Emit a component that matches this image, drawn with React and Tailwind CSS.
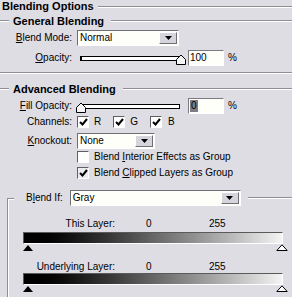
import React from "react";

const etched = "h-[2px] border-t border-t-[#8e8e94] border-b border-b-white";

const Header = ({ title }) => (
  <div className="flex items-center h-[14px]">
    <div className={`w-[9px] ${etched}`} />
    <span className="ml-[4px] font-bold text-[11px] leading-none">{title}</span>
    <div className={`flex-1 ml-[7px] ${etched}`} />
  </div>
);

const Arrow = () => (
  <svg width="7" height="4" viewBox="0 0 7 4">
    <path d="M0 0 H7 L3.5 4 Z" fill="#000" />
  </svg>
);

const Select = ({ value, width }) => (
  <div className={`flex h-[16px] bg-[#fffffa] border border-t-[#6e6e74] border-l-[#6e6e74] border-r-white border-b-white ${width}`}>
    <span className="flex-1 pl-[2px] leading-[14px]">{value}</span>
    <div className="w-[18px] m-[1px] bg-[#d6d5dc] border border-t-white border-l-white border-r-[#6e6e74] border-b-[#6e6e74] flex items-center justify-center">
      <Arrow />
    </div>
  </div>
);

const Input = ({ value, selected }) => (
  <div className="w-[36px] h-[16px] bg-[#fffffa] border border-t-[#7a7a80] border-l-[#7a7a80] border-r-white border-b-white flex items-center pl-[1px]">
    <span className={selected ? "bg-[#7d7d84] text-black px-[1px] leading-[12px]" : "leading-[12px]"}>{value}</span>
  </div>
);

const Thumb = () => (
  <svg width="10" height="11" viewBox="0 0 10 11">
    <path d="M0.5 10.5 V5.5 L5 1 L9.5 5.5 V10.5 Z" fill="#f4f4f4" stroke="#000" />
  </svg>
);

const Slider = ({ left }) => (
  <div className="relative w-[100px] h-[12px] flex items-center">
    <div className="w-full h-[5px] border border-black border-l-2 bg-white" />
    <div className={`absolute top-[2px] ${left ? "left-[-4px]" : "right-[-6px]"}`}>
      <Thumb />
    </div>
  </div>
);

const Check = ({ on, gray }) => (
  <div className={`w-[12px] h-[12px] border border-t-[#5e5e64] border-l-[#5e5e64] border-r-white border-b-white flex items-center justify-center ${gray ? "bg-[#ececee]" : "bg-white"}`}>
    {on && (
      <svg width="9" height="8" viewBox="0 0 9 8">
        <path d="M1 4 L3.5 6.5 L8 1" fill="none" stroke="#000" strokeWidth="2" />
      </svg>
    )}
  </div>
);

const Row = ({ label, children, h = "h-[16px]" }) => (
  <div className={`flex items-center ${h}`}>
    <span className="w-[72px] text-right shrink-0">{label}</span>
    <div className="ml-[5px] flex items-center">{children}</div>
  </div>
);

const Bar = () => (
  <div className="ml-[14px] w-[260px] h-[12px] border border-t-[#5a5a5a] border-l-[#5a5a5a] border-r-white border-b-white bg-gradient-to-r from-black via-[#666666] to-[#f4f4f4]" />
);

const Thumbs = () => (
  <div className="ml-[14px] w-[265px] h-[7px] flex justify-between items-end">
    <svg width="10" height="6" viewBox="0 0 10 6">
      <path d="M5 0 L10 6 H0 Z" fill="#000" />
    </svg>
    <svg width="12" height="7" viewBox="0 0 12 7">
      <path d="M6 0.8 L11.2 6.5 H0.8 Z" fill="#fff" stroke="#000" />
    </svg>
  </div>
);

const LayerLabel = ({ label }) => (
  <div className="flex items-center h-[13px]">
    <span className="w-[106px] text-right">{label}</span>
    <span className="ml-[31px] w-[63px]">0</span>
    <span>255</span>
  </div>
);

export default function App() {
  return (
    <div className="w-[292px] h-[297px] overflow-hidden bg-[#dedde4] text-black text-[10px] leading-none font-[family-name:'Liberation_Sans',Arial,sans-serif]">
      <div className="flex items-center h-[13px]">
        <span className="pl-[2px] font-bold text-[11px]">Blending Options</span>
        <div className={`flex-1 ml-[4px] ${etched}`} />
      </div>

      <div className="mt-[1px]">
        <Header title="General Blending" />
      </div>

      <div className="mt-[2px]">
        <Row label={<><u>B</u>lend Mode:</>}>
          <Select value="Normal" width="w-[102px]" />
        </Row>
      </div>

      <div className="mt-[4px]">
        <Row label={<><u>O</u>pacity:</>}>
          <div className="ml-[3px]"><Slider /></div>
          <div className="ml-[8px]"><Input value="100" /></div>
          <span className="ml-[4px]">%</span>
        </Row>
      </div>

      <div className={`mt-[6px] ${etched}`} />

      <div className="mt-[8px]">
        <Header title="Advanced Blending" />
      </div>

      <div className="mt-[2px]">
        <Row label={<><u>F</u>ill Opacity:</>}>
          <div className="ml-[3px]"><Slider left /></div>
          <div className="ml-[8px]"><Input value="0" selected /></div>
          <span className="ml-[4px]">%</span>
        </Row>
      </div>

      <div className="mt-[1px]">
        <Row label="Channels:" h="h-[13px]">
          <Check on />
          <span className="ml-[5px]">R</span>
          <div className="ml-[12px]"><Check on /></div>
          <span className="ml-[5px]">G</span>
          <div className="ml-[12px]"><Check on /></div>
          <span className="ml-[6px]">B</span>
        </Row>
      </div>

      <div className="mt-[5px]">
        <Row label={<><u>K</u>nockout:</>} h="h-[15px]">
          <Select value="None" width="w-[78px]" />
        </Row>
      </div>

      <div className="mt-[2px] flex items-center h-[13px] pl-[77px]">
        <Check />
        <span className="ml-[5px]">Blend <u>I</u>nterior Effects as Group</span>
      </div>

      <div className="mt-[3px] flex items-center h-[13px] pl-[77px]">
        <Check on gray />
        <span className="ml-[5px]">Blend <u>C</u>lipped Layers as Group</span>
      </div>

      <div className="mt-[11px] ml-[7px]">
        <div className="flex items-center h-[16px]">
          <div className="w-[7px] h-full flex flex-col">
            <div className="h-[8px]" />
            <div className="flex-1 border-t border-l border-t-[#8e8e94] border-l-[#8e8e94] relative">
              <div className="absolute left-0 top-0 w-full h-full border-t border-l border-white" />
            </div>
          </div>
          <span className="ml-[12px]">B<u>l</u>end If:</span>
          <div className="ml-[7px]">
            <Select value="Gray" width="w-[171px]" />
          </div>
          <div className={`flex-1 ml-[7px] ${etched}`} />
        </div>
        <div className="h-[92px] border-l border-l-[#8e8e94]">
          <div className="h-full border-l border-l-white">
            <div className="h-[11px]" />
            <LayerLabel label="This Layer:" />
            <div className="mt-[2px]"><Bar /></div>
            <Thumbs />
            <div className="mt-[9px]"><LayerLabel label="Underlying Layer:" /></div>
            <Bar />
            <Thumbs />
          </div>
        </div>
      </div>
    </div>
  );
}
